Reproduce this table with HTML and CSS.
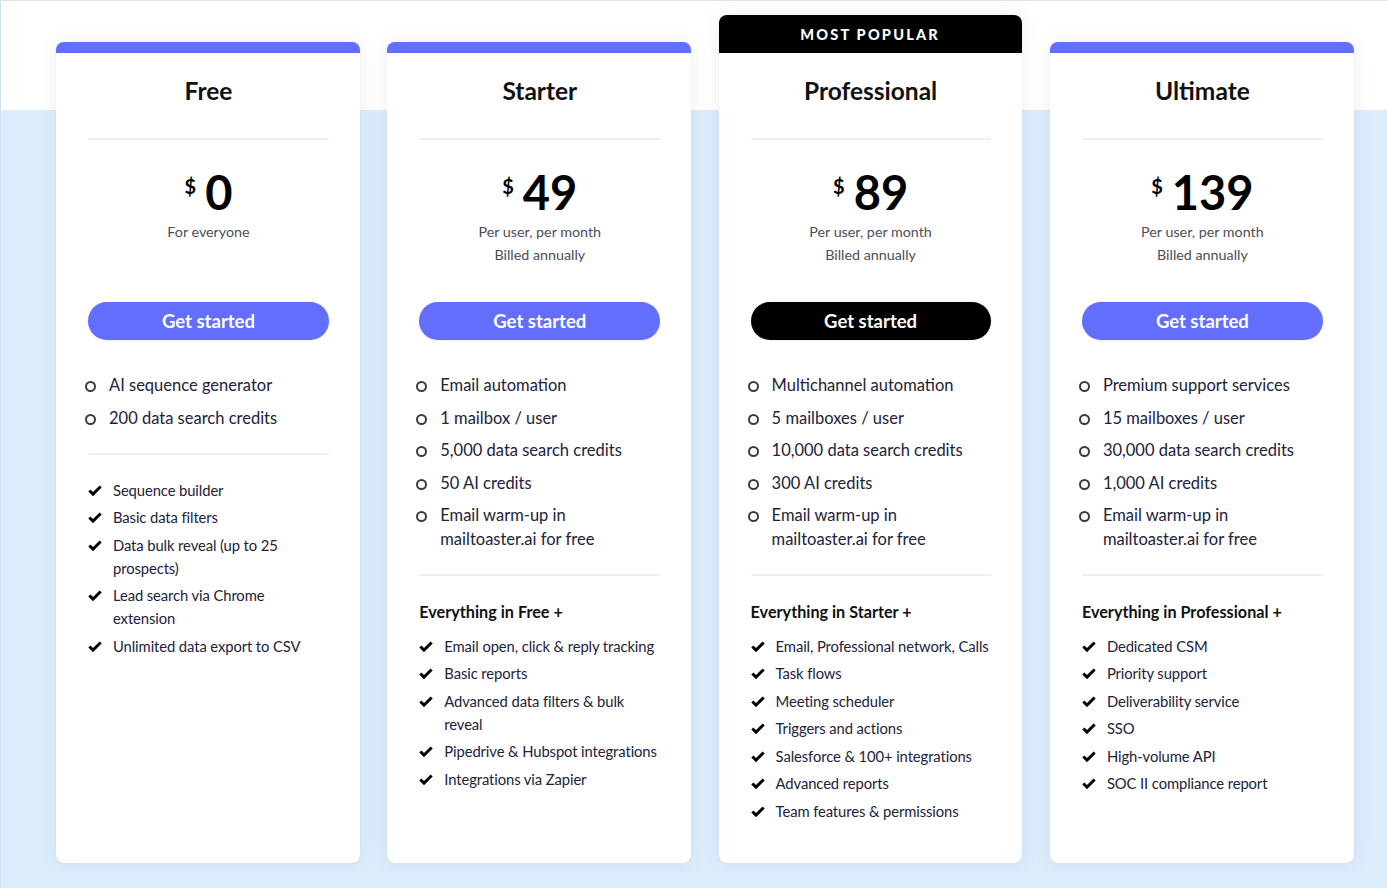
FILE: index.html
```html
<!DOCTYPE html>
<html lang="en">
<head>
<meta charset="utf-8">
<title>Pricing</title>
<link rel="stylesheet" href="styles.css">
</head>
<body>
<div class="page">
  <div class="plans">
    <!-- Free -->
    <div class="card">
      <div class="card-top"></div>
      <div class="card-body">
        <h2 class="title">Free</h2>
        <div class="divider"></div>
        <div class="price"><span class="cur">$</span><span class="amt">0</span></div>
        <div class="sub">For everyone</div>
        <a class="btn">Get started</a>
        <ul class="bullets">
          <li>AI sequence generator</li>
          <li>200 data search credits</li>
        </ul>
        <div class="divider mid"></div>
        <ul class="checks">
          <li>Sequence builder</li>
          <li>Basic data filters</li>
          <li>Data bulk reveal (up to 25 prospects)</li>
          <li>Lead search via Chrome extension</li>
          <li>Unlimited data export to CSV</li>
        </ul>
      </div>
    </div>
    <!-- Starter -->
    <div class="card">
      <div class="card-top"></div>
      <div class="card-body">
        <h2 class="title">Starter</h2>
        <div class="divider"></div>
        <div class="price"><span class="cur">$</span><span class="amt">49</span></div>
        <div class="sub">Per user, per month<br>Billed annually</div>
        <a class="btn">Get started</a>
        <ul class="bullets">
          <li>Email automation</li>
          <li>1 mailbox / user</li>
          <li>5,000 data search credits</li>
          <li>50 AI credits</li>
          <li>Email warm-up in mailtoaster.ai for free</li>
        </ul>
        <div class="divider mid"></div>
        <div class="section">Everything in Free +</div>
        <ul class="checks">
          <li>Email open, click &amp; reply tracking</li>
          <li>Basic reports</li>
          <li>Advanced data filters &amp; bulk reveal</li>
          <li>Pipedrive &amp; Hubspot integrations</li>
          <li>Integrations via Zapier</li>
        </ul>
      </div>
    </div>
    <!-- Professional -->
    <div class="card popular">
      <div class="card-top">MOST POPULAR</div>
      <div class="card-body">
        <h2 class="title">Professional</h2>
        <div class="divider"></div>
        <div class="price"><span class="cur">$</span><span class="amt">89</span></div>
        <div class="sub">Per user, per month<br>Billed annually</div>
        <a class="btn dark">Get started</a>
        <ul class="bullets">
          <li>Multichannel automation</li>
          <li>5 mailboxes / user</li>
          <li>10,000 data search credits</li>
          <li>300 AI credits</li>
          <li>Email warm-up in mailtoaster.ai for free</li>
        </ul>
        <div class="divider mid"></div>
        <div class="section">Everything in Starter +</div>
        <ul class="checks">
          <li>Email, Professional network, Calls</li>
          <li>Task flows</li>
          <li>Meeting scheduler</li>
          <li>Triggers and actions</li>
          <li>Salesforce &amp; 100+ integrations</li>
          <li>Advanced reports</li>
          <li>Team features &amp; permissions</li>
        </ul>
      </div>
    </div>
    <!-- Ultimate -->
    <div class="card">
      <div class="card-top"></div>
      <div class="card-body">
        <h2 class="title">Ultimate</h2>
        <div class="divider"></div>
        <div class="price"><span class="cur">$</span><span class="amt">139</span></div>
        <div class="sub">Per user, per month<br>Billed annually</div>
        <a class="btn">Get started</a>
        <ul class="bullets">
          <li>Premium support services</li>
          <li>15 mailboxes / user</li>
          <li>30,000 data search credits</li>
          <li>1,000 AI credits</li>
          <li>Email warm-up in mailtoaster.ai for free</li>
        </ul>
        <div class="divider mid"></div>
        <div class="section">Everything in Professional +</div>
        <ul class="checks">
          <li>Dedicated CSM</li>
          <li>Priority support</li>
          <li>Deliverability service</li>
          <li>SSO</li>
          <li>High-volume API</li>
          <li>SOC II compliance report</li>
        </ul>
      </div>
    </div>
  </div>
</div>
</body>
</html>
```

FILE: styles.css
```css
* { box-sizing: border-box; }

html, body {
  margin: 0;
  padding: 0;
  height: 100%;
}

body {
  font-family: "Lato", "Liberation Sans", sans-serif;
  color: #1e1e32;
  background: linear-gradient(to bottom, #ffffff 0, #ffffff 110px, #dbedfb 110px, #dbedfb 100%);
  border-top: 1px solid #e3e3e3;
  overflow: hidden;
}

.page {
  height: 887px;
  border-left: 1px solid #cfe2f2;
  padding: 14px 0 0 55px;
}

.plans {
  display: grid;
  grid-template-columns: repeat(4, 304px);
  column-gap: 27.3px;
  align-items: end;
}

.card {
  background: #fff;
  border-radius: 8px;
  box-shadow: 0 0 18px rgba(90, 110, 140, 0.10), 0 0 1px rgba(0, 0, 0, 0.12);
  height: 821px;
  display: flex;
  flex-direction: column;
  overflow: hidden;
}

.card.popular {
  height: 848px;
  width: 303px;
}

.card-top {
  height: 11px;
  background: #636efc;
  flex: none;
}

.popular .card-top {
  height: 38px;
  background: #000;
  color: #fff;
  font-weight: 900;
  font-size: 14.5px;
  letter-spacing: 2.2px;
  text-align: center;
  line-height: 40px;
}

.card-body {
  padding: 24px 31px 0 32px;
  display: flex;
  flex-direction: column;
}

.title {
  margin: 0;
  font-size: 24.5px;
  font-weight: 700;
  line-height: 28px;
  text-align: center;
  color: #111;
}

.divider {
  height: 2px;
  background: #ebf0f5;
  margin-top: 33px;
}

.divider.mid {
  margin-top: 23px;
}

.price {
  margin-top: 28px;
  display: flex;
  justify-content: center;
  align-items: flex-start;
  line-height: 48px;
  height: 48px;
  color: #000;
}

.cur {
  font-size: 20px;
  font-weight: 700;
  line-height: 20px;
  margin-top: 8px;
  margin-right: 9px;
}

.amt {
  font-size: 47px;
  font-weight: 700;
}

.sub {
  margin-top: 4px;
  font-size: 14.3px;
  line-height: 23px;
  color: #4d4d5c;
  text-align: center;
  height: 46px;
}

.btn {
  display: block;
  margin-top: 36px;
  height: 38px;
  border-radius: 20px;
  background: #636efc;
  color: #fff;
  font-weight: 700;
  font-size: 18.5px;
  line-height: 38px;
  text-align: center;
  box-shadow: 0 0 2px rgba(0,0,0,0.15);
}

.btn.dark {
  background: #000;
}

.bullets, .checks {
  list-style: none;
  margin: 0;
  padding: 0;
}

.bullets {
  margin-top: 33px;
  display: flex;
  flex-direction: column;
  gap: 8.5px;
}

.bullets li {
  position: relative;
  padding-left: 21px;
  font-size: 16.5px;
  line-height: 24px;
  color: #22223a;
}

.bullets li::before {
  content: "";
  position: absolute;
  left: -3px;
  top: 8px;
  width: 7px;
  height: 7px;
  border: 2px solid #3a3a44;
  border-radius: 50%;
}

.section {
  margin-top: 24px;
  font-size: 16.2px;
  font-weight: 700;
  line-height: 24px;
  color: #111;
}

.checks {
  margin-top: 24px;
  display: flex;
  flex-direction: column;
  gap: 4.6px;
}

.section + .checks {
  margin-top: 10.5px;
}

.checks li {
  position: relative;
  padding-left: 25px;
  font-size: 14.8px;
  line-height: 23px;
  color: #22223a;
  letter-spacing: -0.1px;
}

.checks li::before {
  content: "";
  position: absolute;
  left: 0;
  top: 6px;
  width: 14px;
  height: 12px;
  background: url("data:image/svg+xml;utf8,<svg xmlns='http://www.w3.org/2000/svg' viewBox='0 0 14 12'><path d='M0.3 6.6 L2.4 4.5 L5 7.1 L11.6 0.5 L13.7 2.6 L5 11.3 Z' fill='black'/></svg>") no-repeat center / contain;
}
```
